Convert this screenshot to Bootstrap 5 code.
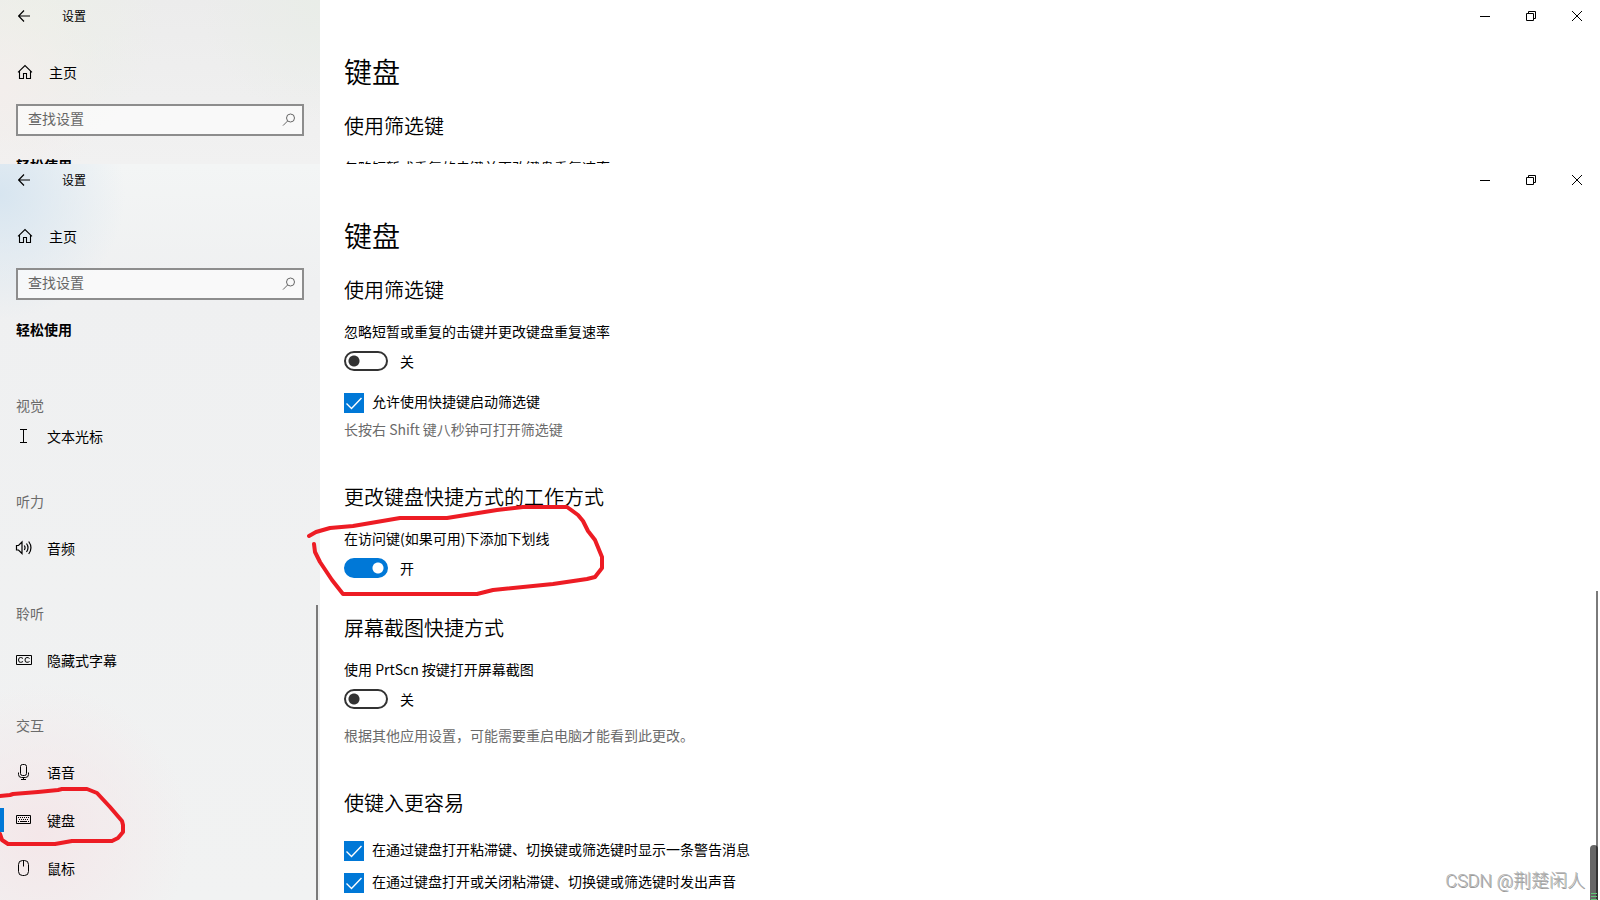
<!DOCTYPE html>
<html lang="zh-CN">
<head>
<meta charset="utf-8">
<meta name="viewport" content="width=device-width, initial-scale=1">
<title>设置</title>
<link href="https://cdn.jsdelivr.net/npm/bootstrap@5.3.0/dist/css/bootstrap.min.css" rel="stylesheet">
<style>
  body { font-family: "Noto Sans CJK SC", "Open Sans", sans-serif; font-size: 14px; line-height: 20px; color: #000; background: #fff; }
  svg { display: block; fill: none; stroke: #000; }
  .win-back { height: 164px; }
  .side-pane { width: 320px; background: #f1f2f2; }
  .win-back .side-pane { background: radial-gradient(circle at 0 90px, #f3eeec, transparent 110px), radial-gradient(circle at 30px 20px, #ecefe8, transparent 130px), radial-gradient(circle at 320px 0, #e9ede8, transparent 120px), linear-gradient(#ececec, #f1f1f1); }
  .win-front .side-pane { background: radial-gradient(circle at 0 30px, #d7e5f0, rgba(215,229,240,0) 125px), radial-gradient(circle at 40px 670px, #f4e7e9, rgba(244,231,233,0) 150px), linear-gradient(#f3f5f5, #eff0f1 120px, #f1f2f2); }
  .title-bar { height: 32px; }
  .title-text { font-size: 12px; margin-left: 22px; }
  .bare { border: 0; background: none; padding: 0; }
  .back-btn { width: 40px; padding-left: 18px; }
  .cap-btn { width: 46px; height: 32px; display: flex; align-items: center; justify-content: center; }
  .home-link { height: 48px; margin-top: 16px; padding-left: 17px; gap: 16px; }
  .side-link { color: #000; text-decoration: none; display: flex; align-items: center; }
  .search-box { margin: 8px 16px 0; height: 32px; border: 2px solid #8d8d8d; background: rgba(255,255,255,.6); padding: 0 6px 0 10px; }
  .search-box input { font-size: 14px; color: #000; outline: 0; min-width: 0; padding-bottom: 4px; }
  .search-box input::placeholder { color: #666; opacity: 1; }
  .side-title { font-size: 14px; line-height: 20px; font-weight: 700; margin: 19px 16px 52px; }
  .group-name { color: #6b6b6b; font-size: 14px; line-height: 20px; font-weight: 400; margin: 31px 16px 13px; }
  .group-name.tight { margin-bottom: -3px; }
  .menu-link { height: 48px; padding-left: 15px; gap: 14px; }
  .current::before { content: ""; position: absolute; left: 0; top: 12px; width: 4px; height: 24px; background: #0078d7; }
  .ink { position: absolute; stroke: #ed1c24; stroke-width: 4; stroke-linejoin: round; stroke-linecap: round; pointer-events: none; }
  .ink-side { left: 0; top: -10px; }
  .ink-main { left: -39px; top: -28px; }
  .page-body { padding: 19px 24px 0; }
  h1 { font-size: 28px; line-height: 40px; font-weight: 350; margin: 0; }
  h2 { font-size: 20px; line-height: 28px; font-weight: 350; margin: 0 0 17px; }
  h1 + section { margin-top: 21px; }
  section + section { margin-top: 44px; }
  section.after-toggle { margin-top: 36px; }
  .toggle-row { margin-top: 10px; height: 20px; gap: 12px; }
  .toggle-row .form-check-input { width: 44px; height: 20px; margin: 0; border: 2px solid #333; border-radius: 10px; background: radial-gradient(circle at 8px 8px, #333 5px, transparent 6px); transition: none; }
  .toggle-row .form-check-input:checked { border-color: #0078d7; background: radial-gradient(circle at 32px 8px, #fff 5px, #0078d7 6px); }
  .tick-row { gap: 8px; height: 20px; margin-top: 12px; }
  .toggle-row + .tick-row { margin-top: 22px; }
  h2 + .tick-row { margin-top: 24px; }
  .tick-row label { padding-bottom: 4px; }
  .tick-row .form-check-input { width: 20px; height: 20px; margin: 0; border-radius: 0; border: 0; }
  .tick-row .form-check-input:checked { background: #0078d7 url("data:image/svg+xml,%3Csvg xmlns='http://www.w3.org/2000/svg' viewBox='0 0 20 20'%3E%3Cpath d='M2.5 10.5l5 5 10-10.500' fill='none' stroke='%23fff' stroke-width='1.400'/%3E%3C/svg%3E"); }
  .note { color: #6b6b6b; margin-top: 6px; }
  .toggle-row + .note { margin-top: 16px; }
  .scroll-thumb { position: absolute; right: 2px; bottom: 0; width: 2px; background: #7a7a7a; }
  .side-pane .scroll-thumb { top: 441px; }
  .main-pane .scroll-thumb { top: 427px; }
  .edge-widget { position: absolute; right: 2px; bottom: 0; width: 8px; height: 55px; border-radius: 4px 4px 0 0; background: linear-gradient(90deg, #666 6px, #333 6px); }
  .edge-widget::after { content: ""; position: absolute; left: 1px; right: 1px; bottom: 0; height: 7px; background: repeating-linear-gradient(#5fc878 0 1px, transparent 1px 3px); }
  .watermark { position: absolute; right: 15px; bottom: 7px; font-family: Roboto, "Noto Sans CJK SC", sans-serif; font-size: 18px; font-weight: 300; line-height: 24px; color: #b4b4b4; text-shadow: 1px 1px 0 #999; }
</style>
</head>
<body class="vh-100 d-flex flex-column overflow-hidden">

<svg width="0" height="0" class="position-absolute" aria-hidden="true">
  <symbol id="i-back" viewBox="0 0 12 12"><path d="M12 6H.7M6 .5.6 6 6 11.500" stroke-width="1.200"/></symbol>
  <symbol id="i-home" viewBox="0 0 16 16"><path d="M1 8.300 8 1.500l7 6.800M2.500 7v7.500h4V9.500h3v5h4V7" stroke-width="1.100"/></symbol>
  <symbol id="i-find" viewBox="0 0 14 14"><circle cx="8.500" cy="5" r="4" stroke="#666"/><path d="M5.600 8 1 12.600" stroke="#666"/></symbol>
  <symbol id="i-min" viewBox="0 0 10 10"><path d="M0 5.500h10"/></symbol>
  <symbol id="i-rest" viewBox="0 0 10 10"><path d="M.5 2.500h7v7h-7zM2.500 2.500v-2h7v7h-2"/></symbol>
  <symbol id="i-close" viewBox="0 0 10 10"><path d="m0 0 10 10M10 0 0 10"/></symbol>
</svg>

<div class="win-back d-flex flex-shrink-0 overflow-hidden">
  <aside class="side-pane flex-shrink-0">
    <div class="title-bar d-flex align-items-center">
      <button class="bare back-btn" aria-label="返回"><svg width="12" height="12"><use href="#i-back"/></svg></button>
      <span class="title-text">设置</span>
    </div>
    <a href="#" class="side-link home-link"><svg width="16" height="16"><use href="#i-home"/></svg>主页</a>
    <div class="search-box d-flex align-items-center">
      <input class="bare flex-grow-1" type="text" placeholder="查找设置" aria-label="查找设置">
      <svg width="14" height="14"><use href="#i-find"/></svg>
    </div>
    <div class="side-title">轻松使用</div>
  </aside>
  <main class="flex-grow-1">
    <div class="title-bar d-flex justify-content-end">
      <button class="bare cap-btn" aria-label="最小化"><svg width="10" height="10"><use href="#i-min"/></svg></button>
      <button class="bare cap-btn" aria-label="还原"><svg width="10" height="10"><use href="#i-rest"/></svg></button>
      <button class="bare cap-btn" aria-label="关闭"><svg width="10" height="10"><use href="#i-close"/></svg></button>
    </div>
    <div class="page-body">
      <h1>键盘</h1>
      <section><h2>使用筛选键</h2><div>忽略短暂或重复的击键并更改键盘重复速率</div></section>
    </div>
  </main>
</div>

<div class="win-front d-flex flex-grow-1 overflow-hidden position-relative">
  <aside class="side-pane flex-shrink-0 position-relative">
    <div class="title-bar d-flex align-items-center">
      <button class="bare back-btn" aria-label="返回"><svg width="12" height="12"><use href="#i-back"/></svg></button>
      <span class="title-text">设置</span>
    </div>
    <a href="#" class="side-link home-link"><svg width="16" height="16"><use href="#i-home"/></svg>主页</a>
    <div class="search-box d-flex align-items-center">
      <input class="bare flex-grow-1" type="text" placeholder="查找设置" aria-label="查找设置">
      <svg width="14" height="14"><use href="#i-find"/></svg>
    </div>
    <div class="side-title">轻松使用</div>
    <nav>
      <h3 class="group-name tight mt-0 pt-1">视觉</h3>
      <a href="#" class="side-link menu-link"><svg width="18" height="18" viewBox="0 0 18 18"><path d="M5 2.500h7M5 15.500h7M8.500 2.500v13"/></svg>文本光标</a>
      <h3 class="group-name">听力</h3>
      <a href="#" class="side-link menu-link"><svg width="18" height="18" viewBox="0 0 18 18"><path d="M1.500 6.500h2l3.500-3.500v11.500L3.500 11h-2zM9.300 6.500q1.500 2.300 0 4.500M11.500 4.500q3 4.200 0 8.500M13.700 2.500q4.500 6.200 0 12.500" stroke-width="1.200"/></svg>音频</a>
      <h3 class="group-name">聆听</h3>
      <a href="#" class="side-link menu-link"><svg width="18" height="18" viewBox="0 0 18 18"><path d="M1.500 4.500h15v9h-15zM8 7.500q-1-1-2.500-1-2 0-2 2.500t2 2.300q1.500 0 2.500-.8M14.500 7.500q-1-1-2.500-1-2 0-2 2.500t2 2.300q1.500 0 2.500-.8"/></svg>隐藏式字幕</a>
      <h3 class="group-name">交互</h3>
      <a href="#" class="side-link menu-link"><svg width="18" height="18" viewBox="0 0 18 18"><rect x="5.500" y="1.500" width="6" height="11" rx="2"/><path d="M3.500 9.500v2q0 3 3 3h4q3 0 3-3v-2M8.500 14.500v2M6 16.500h5"/></svg>语音</a>
      <a href="#" class="side-link menu-link current position-relative"><svg width="18" height="18" viewBox="0 0 18 18"><path d="M1.500 4.500h14v8h-14z"/><path d="M3 6.500h11M4 8.500h10" stroke-dasharray="1 1"/><path d="M3 10.500h1M5 10.500h7M13 10.500h1"/></svg>键盘<svg class="ink ink-side" width="130" height="64" viewBox="0 0 130 64"><path d="M0 10 10 9l3-1 25-2 20-2 4-1h25l10 4 13 14 12 14 1 4v7l-5 6-6 3H72l-17 3H8l-6-4-2-6"/></svg></a>
      <a href="#" class="side-link menu-link"><svg width="18" height="18" viewBox="0 0 18 18"><rect x="3.500" y="1.500" width="10" height="15" rx="4"/><path d="M8.500 1.500v6"/></svg>鼠标</a>
    </nav>
    <div class="scroll-thumb"></div>
  </aside>

  <main class="main-pane flex-grow-1">
    <div class="title-bar d-flex justify-content-end">
      <button class="bare cap-btn" aria-label="最小化"><svg width="10" height="10"><use href="#i-min"/></svg></button>
      <button class="bare cap-btn" aria-label="还原"><svg width="10" height="10"><use href="#i-rest"/></svg></button>
      <button class="bare cap-btn" aria-label="关闭"><svg width="10" height="10"><use href="#i-close"/></svg></button>
    </div>
    <div class="page-body">
      <h1>键盘</h1>
      <section>
        <h2>使用筛选键</h2>
        <div id="l1">忽略短暂或重复的击键并更改键盘重复速率</div>
        <div class="toggle-row d-flex align-items-center"><input class="form-check-input" type="checkbox" role="switch" id="s1" aria-labelledby="l1"><label for="s1">关</label></div>
        <div class="tick-row d-flex align-items-center"><input class="form-check-input" type="checkbox" id="c1" checked><label for="c1">允许使用快捷键启动筛选键</label></div>
        <div class="note">长按右 Shift 键八秒钟可打开筛选键</div>
      </section>
      <section>
        <h2>更改键盘快捷方式的工作方式</h2>
        <div class="position-relative">
          <div id="l2">在访问键(如果可用)下添加下划线</div>
          <div class="toggle-row d-flex align-items-center"><input class="form-check-input" type="checkbox" role="switch" id="s2" aria-labelledby="l2" checked><label for="s2">开</label></div>
          <svg class="ink ink-main" width="310" height="100" viewBox="0 0 310 100"><path d="M4 36 11 32 25 28 48 26 95 18h47l50-8 26-3h44l11 8 5 6 5 10 7 9 7 17v11l-7 9-8 2-34 5-60 6-16 4H38L27 80 15 62 10 52 9 44"/></svg>
        </div>
      </section>
      <section class="after-toggle">
        <h2>屏幕截图快捷方式</h2>
        <div id="l3">使用 PrtScn 按键打开屏幕截图</div>
        <div class="toggle-row d-flex align-items-center"><input class="form-check-input" type="checkbox" role="switch" id="s3" aria-labelledby="l3"><label for="s3">关</label></div>
        <div class="note">根据其他应用设置，可能需要重启电脑才能看到此更改。</div>
      </section>
      <section>
        <h2>使键入更容易</h2>
        <div class="tick-row d-flex align-items-center"><input class="form-check-input" type="checkbox" id="c2" checked><label for="c2">在通过键盘打开粘滞键、切换键或筛选键时显示一条警告消息</label></div>
        <div class="tick-row d-flex align-items-center"><input class="form-check-input" type="checkbox" id="c3" checked><label for="c3">在通过键盘打开或关闭粘滞键、切换键或筛选键时发出声音</label></div>
      </section>
    </div>
    <div class="scroll-thumb"></div>
    <div class="edge-widget"></div>
    <div class="watermark">CSDN @荆楚闲人</div>
  </main>
</div>
<script src="https://cdn.jsdelivr.net/npm/bootstrap@5.3.0/dist/js/bootstrap.bundle.min.js"></script>
</body>
</html>
